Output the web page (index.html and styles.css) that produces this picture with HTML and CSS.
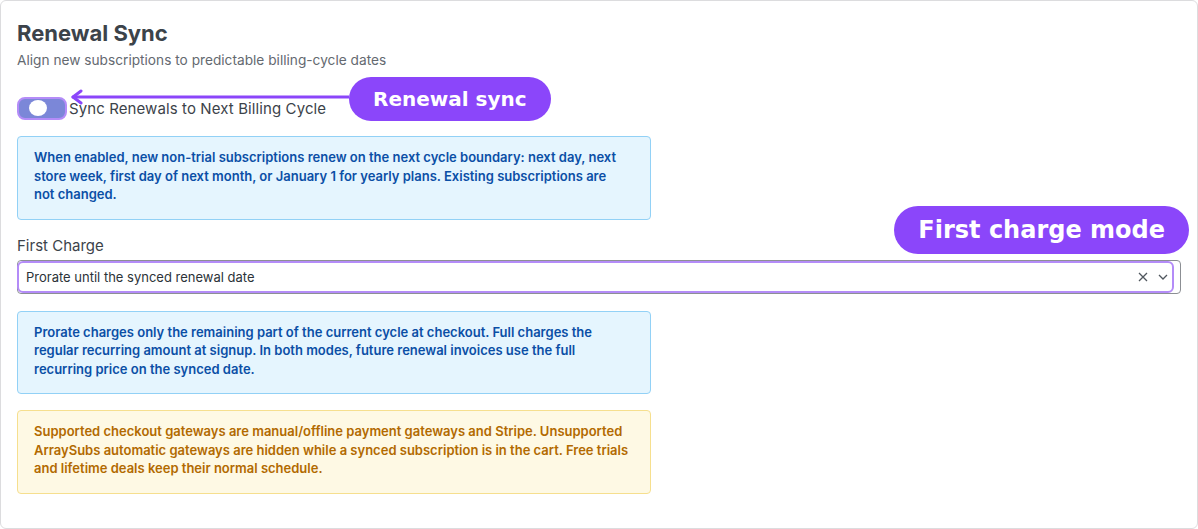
FILE: index.html
```
<!DOCTYPE html>
<html lang="en">

<head>
    <meta charset="UTF-8">
    <meta name="viewport" content="width=device-width, initial-scale=1.0">
    <title>Renewal Sync</title>
    <link rel="stylesheet" href="styles.css">
</head>

<body>
    <div class="card">
        <h1 class="title">Renewal Sync</h1>
        <p class="subtitle">Align new subscriptions to predictable billing-cycle dates</p>

        <div class="toggleRow">
            <span class="toggle">
                <span class="knob"></span>
            </span>
            <span class="toggleLabel">Sync Renewals to Next Billing Cycle</span>

            <div class="callout calloutSync">
                <svg class="arrow" width="279" height="16" viewBox="0 0 279 16">
                    <path d="M3 8 H279" stroke="#8b46fa" stroke-width="3" fill="none" stroke-linecap="round" />
                    <path d="M11 2 L3 8 L11 14" stroke="#8b46fa" stroke-width="3" fill="none" stroke-linecap="round" stroke-linejoin="round" />
                </svg>
                <span class="pill">Renewal sync</span>
            </div>
        </div>

        <div class="notice info">
            When enabled, new non-trial subscriptions renew on the next cycle boundary: next day, next store week, first day of next month, or January 1 for yearly plans. Existing subscriptions are not changed.
        </div>

        <div class="fieldHead">
            <label class="fieldLabel">First Charge</label>
            <span class="pill pillBig">First charge mode</span>
        </div>

        <div class="select">
            <span class="selectValue">Prorate until the synced renewal date</span>
            <span class="selectIcons">
                <svg width="10" height="10" viewBox="0 0 10 10">
                    <path d="M1 1 L9 9 M9 1 L1 9" stroke="#50575e" stroke-width="1.3" fill="none" />
                </svg>
                <svg width="10" height="6" viewBox="0 0 10 6">
                    <path d="M1 1 L5 5 L9 1" stroke="#50575e" stroke-width="1.3" fill="none" />
                </svg>
            </span>
            <span class="selectRing"></span>
        </div>

        <div class="notice info">
            Prorate charges only the remaining part of the current cycle at checkout. Full charges the regular recurring amount at signup. In both modes, future renewal invoices use the full recurring price on the synced date.
        </div>

        <div class="notice warn">
            Supported checkout gateways are manual/offline payment gateways and Stripe. Unsupported ArraySubs automatic gateways are hidden while a synced subscription is in the cart. Free trials and lifetime deals keep their normal schedule.
        </div>
    </div>
</body>

</html>
```

FILE: styles.css
```
body {
    margin: 0;
    font-family: Inter, "Noto Sans", sans-serif;
    color: #3c434a;
    background: #fff;
}

.card {
    box-sizing: border-box;
    width: 100vw;
    height: 100vh;
    border: 1px solid #dcdcde;
    border-radius: 6px;
    padding: 18px 16px 0 16px;
    display: flex;
    flex-direction: column;
}

.title {
    margin: 0;
    font-size: 22px;
    line-height: 28px;
    font-weight: 700;
    color: #3c434a;
}

.subtitle {
    margin: 4px 0 0 0;
    font-size: 13.7px;
    line-height: 18px;
    color: #646970;
}

.toggleRow {
    position: relative;
    margin-top: 27px;
    height: 24px;
    display: flex;
    align-items: center;
    gap: 2px;
}

.toggle {
    position: relative;
    box-sizing: border-box;
    width: 50px;
    height: 23px;
    border-radius: 8px;
    border: 2px solid #b48cf8;
    background: #7b87d8;
    display: flex;
    align-items: center;
    padding-left: 10px;
}

.knob {
    width: 18px;
    height: 16px;
    border-radius: 50%;
    background: #fff;
}

.toggleLabel {
    font-size: 15px;
    letter-spacing: 0.1px;
    color: #3c434a;
}

.callout {
    position: absolute;
    left: 53px;
    top: -19px;
    display: flex;
    align-items: center;
}

.arrow {
    margin-top: -4px;
}

.pill {
    display: inline-block;
    background: #8b46fa;
    color: #fff;
    font-family: "DejaVu Sans", sans-serif;
    font-weight: bold;
    font-size: 20px;
    line-height: 44px;
    padding: 0 24px;
    border-radius: 22px;
}

.notice {
    box-sizing: border-box;
    width: 634px;
    margin-top: 16px;
    padding: 11px 21px 15px 16px;
    border-radius: 4px;
    font-size: 13px;
    line-height: 18.5px;
    font-weight: 600;
}

.info {
    background: #e5f5fe;
    border: 1px solid #92d1f6;
    color: #0b4fa6;
}

.warn {
    background: #fef9e4;
    border: 1px solid #f6df8e;
    color: #b26a00;
}

.fieldHead {
    position: relative;
    margin-top: 15px;
    height: 20px;
}

.fieldLabel {
    font-size: 15px;
    line-height: 20px;
    color: #3c434a;
}

.pillBig {
    position: absolute;
    right: -8px;
    top: -29px;
    font-size: 24px;
    line-height: 48px;
    padding: 0 24px;
    border-radius: 24px;
}

.select {
    position: relative;
    box-sizing: border-box;
    margin-top: 5px;
    width: 1164px;
    height: 34px;
    border: 1px solid #8c8f94;
    border-radius: 4px;
    display: flex;
    align-items: center;
    justify-content: space-between;
    padding: 0 8px;
}

.selectValue {
    font-size: 13px;
    color: #2c3338;
}

.selectIcons {
    display: flex;
    align-items: center;
    gap: 10px;
    margin-right: 4px;
}

.selectRing {
    position: absolute;
    left: -1px;
    right: 6px;
    top: 0;
    bottom: 0;
    border: 2px solid #b48cf8;
    border-radius: 6px;
}

.select + .notice {
    margin-top: 17px;
}
```
